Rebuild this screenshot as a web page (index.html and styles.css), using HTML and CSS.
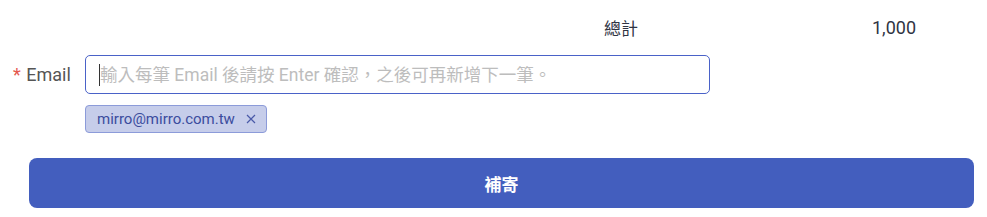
FILE: index.html
```html
<!DOCTYPE html>
<html lang="zh-Hant">
<head>
    <meta charset="UTF-8">
    <meta name="viewport" content="width=device-width, initial-scale=1.0">
    <title>補寄</title>
    <link rel="stylesheet" href="styles.css">
</head>
<body>
    <div class="resend-panel">
        <div class="total-row">
            <span class="total-label">總計</span>
            <span class="total-value">1,000</span>
        </div>

        <div class="email-row">
            <label class="email-label" for="email-input"><span class="required">*</span> Email</label>
            <div class="email-field">
                <span class="caret"></span>
                <input id="email-input" class="email-input" type="text" placeholder="輸入每筆 Email 後請按 Enter 確認，之後可再新增下一筆。">
            </div>
        </div>

        <div class="tag-list">
            <span class="tag">mirro@mirro.com.tw
                <svg class="tag-close" width="10" height="10" viewBox="0 0 10 10">
                    <path d="M1 1 L9 9 M9 1 L1 9" stroke="#4a5aa8" stroke-width="1.2" fill="none"/>
                </svg>
            </span>
        </div>

        <button class="submit-btn">補寄</button>
    </div>
</body>
</html>
```

FILE: styles.css
```css
body {
    font-family: 'Roboto', 'Noto Sans CJK TC', sans-serif;
    background-color: #fff;
    margin: 0;
    padding: 0;
}
.resend-panel {
    width: 987px;
}
.total-row {
    display: flex;
    justify-content: flex-end;
    align-items: center;
    height: 54px;
    padding-right: 71px;
    font-size: 17px;
    color: #2f3443;
}
.total-label {
    width: 240px;
}
.total-value {
    width: 72px;
    text-align: right;
    font-size: 18px;
}
.email-row {
    display: flex;
    align-items: center;
    margin-top: 1px;
}
.email-label {
    width: 85px;
    flex-shrink: 0;
    padding-left: 13px;
    box-sizing: border-box;
    font-size: 18px;
    color: #555;
}
.required {
    color: #e4574e;
    margin-right: 1px;
}
.email-field {
    position: relative;
    width: 625px;
    height: 39px;
    border: 1px solid #4a62c8;
    border-radius: 5px;
    box-sizing: border-box;
}
.email-input {
    width: 100%;
    height: 100%;
    border: none;
    outline: none;
    padding: 0 12px 0 14px;
    box-sizing: border-box;
    font-family: 'Roboto', 'Noto Sans CJK TC', sans-serif;
    font-size: 17.5px;
    background: transparent;
}
.email-input::placeholder {
    color: #bdbdbd;
}
.caret {
    position: absolute;
    left: 13px;
    top: 8px;
    width: 1px;
    height: 22px;
    background: #333;
}
.tag-list {
    display: flex;
    margin: 11px 0 0 85px;
}
.tag {
    display: inline-flex;
    align-items: center;
    height: 28px;
    padding: 0 10px 0 11px;
    box-sizing: border-box;
    background: #c6cdea;
    border: 1px solid #8c9bd9;
    border-radius: 4px;
    font-size: 15px;
    color: #3b4c9e;
}
.tag-close {
    margin-left: 11px;
}
.submit-btn {
    display: block;
    width: 945px;
    height: 50px;
    margin: 25px 0 0 29px;
    background-color: #435ebe;
    color: white;
    border: none;
    border-radius: 8px;
    font-family: 'Roboto', 'Noto Sans CJK TC', sans-serif;
    font-size: 17px;
    font-weight: bold;
    cursor: pointer;
}
```
